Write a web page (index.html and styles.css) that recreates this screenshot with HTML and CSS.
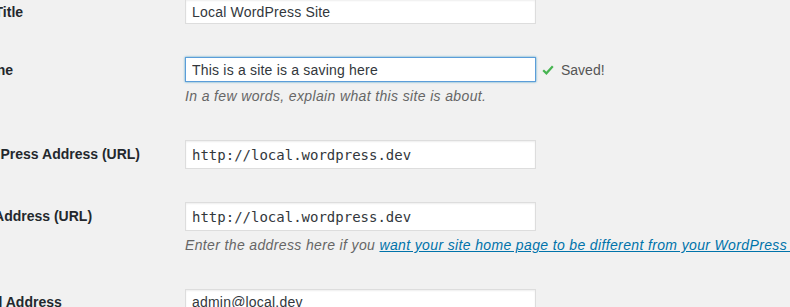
FILE: index.html
```html
<!DOCTYPE html>
<html lang="en">
<head>
    <meta charset="UTF-8">
    <meta name="viewport" content="width=device-width, initial-scale=1.0">
    <title>General Settings</title>
    <link rel="stylesheet" href="styles.css">
</head>
<body>
    <div class="wrap">
        <div class="form-table">
            <div class="row">
                <div class="th"><label for="blogname">Site Title</label></div>
                <div class="td">
                    <div class="field">
                        <input type="text" id="blogname" class="regular-text" value="Local WordPress Site">
                    </div>
                </div>
            </div>

            <div class="row">
                <div class="th"><label for="blogdescription">Tagline</label></div>
                <div class="td">
                    <div class="field">
                        <input type="text" id="blogdescription" class="regular-text focus" value="This is a site is a saving here">
                        <span class="saved">
                            <svg class="check" width="12" height="10" viewBox="0 0 12 10"><path d="M1.2 5.2 L4.4 8.3 L10.8 1.2" fill="none" stroke="#46b450" stroke-width="2.2"/></svg>
                            Saved!
                        </span>
                    </div>
                    <p class="description">In a few words, explain what this site is about.</p>
                </div>
            </div>

            <div class="row">
                <div class="th th-code"><label for="siteurl">WordPress Address (URL)</label></div>
                <div class="td">
                    <div class="field">
                        <input type="url" id="siteurl" class="regular-text code" value="http://local.wordpress.dev">
                    </div>
                </div>
            </div>

            <div class="row">
                <div class="th th-code"><label for="home">Site Address (URL)</label></div>
                <div class="td">
                    <div class="field">
                        <input type="url" id="home" class="regular-text code" value="http://local.wordpress.dev">
                    </div>
                    <p class="description">Enter the address here if you <a href="#">want your site home page to be different from your WordPress installation directory</a>.</p>
                </div>
            </div>

            <div class="row">
                <div class="th"><label for="admin_email">Email Address</label></div>
                <div class="td">
                    <div class="field">
                        <input type="email" id="admin_email" class="regular-text" value="admin@local.dev">
                    </div>
                </div>
            </div>
        </div>
    </div>
</body>
</html>
```

FILE: styles.css
```css
body {
    margin: 0;
    background-color: #f1f1f1;
    color: #444;
    font-family: "Liberation Sans", Arial, sans-serif;
    font-size: 14px;
    overflow: hidden;
}
.wrap {
    margin-top: -17px;
    margin-left: -35px;
}
.form-table {
    display: flex;
    flex-direction: column;
}
.row {
    display: flex;
    align-items: flex-start;
}
.th {
    width: 200px;
    flex-shrink: 0;
    padding: 20px 10px 0 0;
    line-height: 18px;
    white-space: nowrap;
}
.th label {
    font-weight: bold;
    color: #23282d;
}
.th-code {
    padding-top: 21px;
}
.td {
    padding: 16px 10px 17px 10px;
    flex-grow: 1;
    min-width: 0;
}
.field {
    display: flex;
    align-items: center;
}
.regular-text {
    box-sizing: border-box;
    width: 351px;
    height: 25px;
    margin: 0;
    padding: 0 6px;
    border: 1px solid #ddd;
    border-radius: 0;
    background-color: #fff;
    box-shadow: inset 0 1px 2px rgba(0, 0, 0, 0.07);
    color: #32373c;
    font-family: "Liberation Sans", Arial, sans-serif;
    font-size: 14px;
    letter-spacing: 0.2px;
    outline: none;
}
.regular-text.code {
    height: 29px;
    font-family: "DejaVu Sans Mono", Menlo, monospace;
    font-size: 14px;
    letter-spacing: 0;
}
.regular-text.focus {
    border-color: #5b9dd9;
    box-shadow: 0 0 2px rgba(30, 140, 190, 0.8);
}
.saved {
    display: flex;
    align-items: center;
    margin-left: 6px;
    color: #555;
    white-space: nowrap;
}
.check {
    margin-right: 7px;
}
.description {
    margin: 4px 0 0 0;
    line-height: 21px;
    color: #666;
    font-size: 14px;
    font-style: italic;
    letter-spacing: 0.36px;
    white-space: nowrap;
}
.description a {
    color: #0073aa;
    text-decoration: underline;
}
```
